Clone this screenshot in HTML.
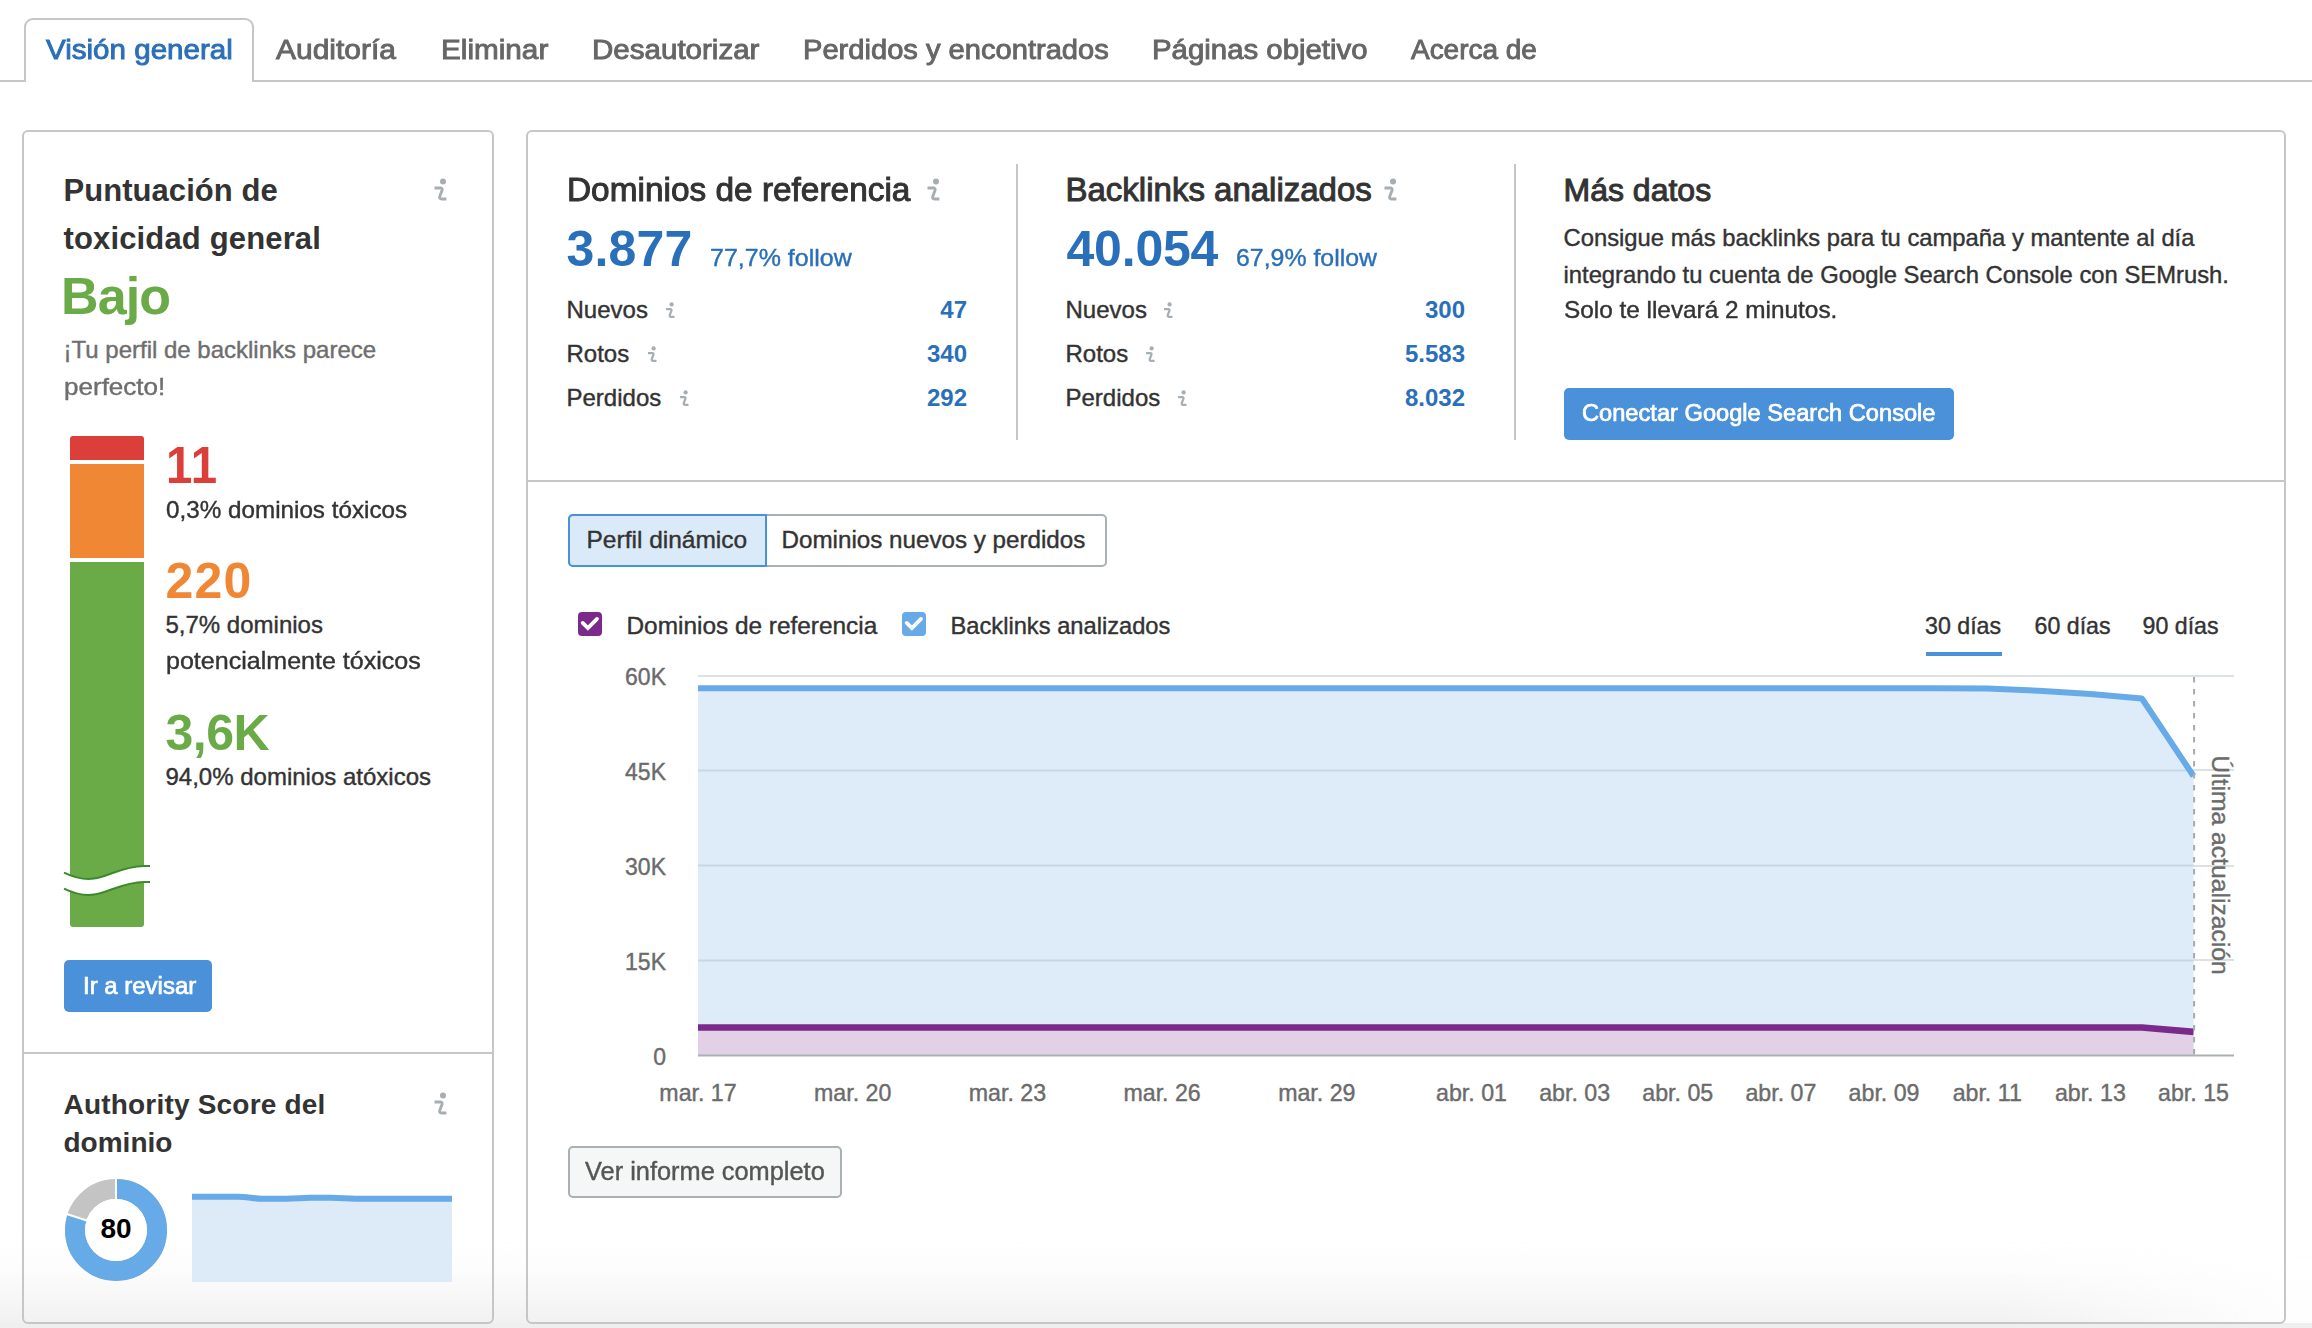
<!DOCTYPE html>
<html><head><meta charset="utf-8"><title>Backlink Audit</title>
<style>
html,body{margin:0;padding:0;background:#fff;width:2312px;height:1328px;overflow:hidden;}
body{position:relative;font-family:"Liberation Sans", sans-serif;}
.t{position:absolute;white-space:nowrap;}
.r{position:absolute;box-sizing:content-box;}
svg.r{overflow:visible;}
</style></head><body>
<div class="r" style="left:0px;top:80px;width:2312px;height:2px;background:#c6c6c6"></div>
<div class="r" style="left:24px;top:18px;width:226px;height:62px;border:2px solid #c6c6c6;border-bottom:none;border-radius:9px 9px 0 0;background:#fff"></div>
<div class="t" style="top:37.44px;font-size:27px;line-height:27px;font-weight:400;color:#2b6fb8;left:46.20px;transform:scaleX(1.095);transform-origin:left center;-webkit-text-stroke:0.9px #2b6fb8;">Visión general</div>
<div class="t" style="top:37.44px;font-size:27px;line-height:27px;font-weight:400;color:#666666;left:276.20px;transform:scaleX(1.11);transform-origin:left center;-webkit-text-stroke:0.9px #666666;">Auditoría</div>
<div class="t" style="top:37.44px;font-size:27px;line-height:27px;font-weight:400;color:#666666;left:441.20px;transform:scaleX(1.1);transform-origin:left center;-webkit-text-stroke:0.9px #666666;">Eliminar</div>
<div class="t" style="top:37.44px;font-size:27px;line-height:27px;font-weight:400;color:#666666;left:592.20px;transform:scaleX(1.094);transform-origin:left center;-webkit-text-stroke:0.9px #666666;">Desautorizar</div>
<div class="t" style="top:37.44px;font-size:27px;line-height:27px;font-weight:400;color:#666666;left:803.20px;transform:scaleX(1.078);transform-origin:left center;-webkit-text-stroke:0.9px #666666;">Perdidos y encontrados</div>
<div class="t" style="top:37.44px;font-size:27px;line-height:27px;font-weight:400;color:#666666;left:1151.70px;transform:scaleX(1.088);transform-origin:left center;-webkit-text-stroke:0.9px #666666;">Páginas objetivo</div>
<div class="t" style="top:37.44px;font-size:27px;line-height:27px;font-weight:400;color:#666666;left:1411.20px;transform:scaleX(1.035);transform-origin:left center;-webkit-text-stroke:0.9px #666666;">Acerca de</div>
<div class="r" style="left:0;top:1235px;width:2312px;height:93px;background:linear-gradient(to bottom, rgba(240,240,240,0) 0%, rgba(240,240,240,0.15) 35%, rgba(240,240,240,0.6) 70%, rgba(240,240,240,1) 100%);-webkit-mask-image:linear-gradient(to right, #000 0px, #000 2000px, rgba(0,0,0,0.1) 2290px);"></div>
<div class="r" style="left:0;top:1323px;width:2312px;height:5px;background:#efefef"></div>
<div class="r" style="left:22px;top:130px;width:468px;height:1190px;border:2px solid #c6c6c6;border-radius:6px"></div>
<div class="r" style="left:526px;top:130px;width:1756px;height:1190px;border:2px solid #c6c6c6;border-radius:6px"></div>
<div class="r" style="left:24px;top:1052px;width:468px;height:2px;background:#c6c6c6"></div>
<div class="r" style="left:528px;top:480px;width:1756px;height:2px;background:#c6c6c6"></div>
<div class="r" style="left:1016px;top:164px;width:2px;height:276px;background:#c6c6c6"></div>
<div class="r" style="left:1514px;top:164px;width:2px;height:276px;background:#c6c6c6"></div>
<div class="t" style="top:174.56px;font-size:31px;line-height:31px;font-weight:700;color:#333333;letter-spacing:0.05px;left:63.50px;">Puntuación de</div>
<div class="t" style="top:222.56px;font-size:31px;line-height:31px;font-weight:700;color:#333333;letter-spacing:0.15px;left:63.50px;">toxicidad general</div>
<svg class="r" style="left:432.50px;top:178.05px" width="15.00" height="22.50" viewBox="-1.5 -10 15 22.5"><circle cx="8.50" cy="-6.5" r="3" fill="#a6aeb2"/><path d="M0 0 L5.8 0 C7.3 0 7.9 0.9 7.6 2.2 L5.2 8.6 C4.8 10.1 5.5 10.95 7.1 10.95 L11.9 10.95" fill="none" stroke="#a6aeb2" stroke-width="2.9"/></svg>
<div class="t" style="top:269.78px;font-size:52px;line-height:52px;font-weight:700;color:#6aab47;letter-spacing:-0.9px;left:61.00px;">Bajo</div>
<div class="t" style="top:338.48px;font-size:24px;line-height:24px;font-weight:400;color:#6e6e6e;left:63.50px;-webkit-text-stroke:0.4px #6e6e6e;">¡Tu perfil de backlinks parece</div>
<div class="t" style="top:374.98px;font-size:24px;line-height:24px;font-weight:400;color:#6e6e6e;left:63.50px;transform:scaleX(1.085);transform-origin:left center;-webkit-text-stroke:0.4px #6e6e6e;">perfecto!</div>
<div class="r" style="left:70px;top:436px;width:74px;height:24px;background:#dc3f3a;border-radius:3px 3px 0 0"></div>
<div class="r" style="left:70px;top:464px;width:74px;height:94px;background:#ef8734"></div>
<div class="r" style="left:70px;top:562px;width:74px;height:365px;background:#6aab47;border-radius:0 0 3px 3px"></div>
<svg class="r" style="left:56px;top:850px" width="104" height="60" viewBox="0 0 104 60"><path d="M8 22.6 C 18 27.5, 28 30, 38 28.6 C 52 26.4, 68 16, 88 16 L 94 16 L 94 32 L 88 32 C 68 32, 52 42.4, 38 44.6 C 28 46, 18 43.5, 8 38.6 Z" fill="#fff"/><path d="M8 22.6 C 18 27.5, 28 30, 38 28.6 C 52 26.4, 68 16, 88 16 L 94 16" fill="none" stroke="#3b8a2b" stroke-width="2"/><path d="M8 38.6 C 18 43.5, 28 46, 38 44.6 C 52 42.4, 68 32, 88 32 L 94 32" fill="none" stroke="#3b8a2b" stroke-width="2"/></svg>
<div class="t" style="top:439.63px;font-size:51px;line-height:51px;font-weight:700;color:#dc3f3a;letter-spacing:1px;left:165.50px;transform:scaleX(0.93);transform-origin:left center;">11</div>
<div class="t" style="top:497.98px;font-size:24px;line-height:24px;font-weight:400;color:#333333;left:165.50px;transform:scaleX(1.01);transform-origin:left center;-webkit-text-stroke:0.4px #333333;">0,3% dominios tóxicos</div>
<div class="t" style="top:556.47px;font-size:50px;line-height:50px;font-weight:700;color:#ef8734;letter-spacing:1.2px;left:165.50px;">220</div>
<div class="t" style="top:613.48px;font-size:24px;line-height:24px;font-weight:400;color:#333333;left:165.50px;-webkit-text-stroke:0.4px #333333;">5,7% dominios</div>
<div class="t" style="top:649.15px;font-size:24.4px;line-height:24.4px;font-weight:400;color:#333333;left:165.50px;transform:scaleX(1.027);transform-origin:left center;-webkit-text-stroke:0.4px #333333;">potencialmente tóxicos</div>
<div class="t" style="top:708.47px;font-size:50px;line-height:50px;font-weight:700;color:#6aab47;letter-spacing:-0.5px;left:165.50px;">3,6K</div>
<div class="t" style="top:765.48px;font-size:24px;line-height:24px;font-weight:400;color:#333333;left:165.50px;-webkit-text-stroke:0.4px #333333;">94,0% dominios atóxicos</div>
<div class="r" style="left:64px;top:960px;width:148px;height:52px;background:#4a91d9;border-radius:5px"></div>
<div class="t" style="top:974.91px;font-size:23.5px;line-height:23.5px;font-weight:400;color:#ffffff;left:82.50px;transform:scaleX(1.02);transform-origin:left center;-webkit-text-stroke:0.7px #ffffff;">Ir a revisar</div>
<div class="t" style="top:1091.10px;font-size:28px;line-height:28px;font-weight:700;color:#333333;letter-spacing:0.2px;left:63.50px;">Authority Score del</div>
<div class="t" style="top:1128.60px;font-size:28px;line-height:28px;font-weight:700;color:#333333;left:63.50px;">dominio</div>
<svg class="r" style="left:432.50px;top:1092.05px" width="15.00" height="22.50" viewBox="-1.5 -10 15 22.5"><circle cx="8.50" cy="-6.5" r="3" fill="#a6aeb2"/><path d="M0 0 L5.8 0 C7.3 0 7.9 0.9 7.6 2.2 L5.2 8.6 C4.8 10.1 5.5 10.95 7.1 10.95 L11.9 10.95" fill="none" stroke="#a6aeb2" stroke-width="2.9"/></svg>
<svg class="r" style="left:64px;top:1178px" width="104" height="104" viewBox="0 0 104 104"><circle cx="52" cy="52" r="41" fill="none" stroke="#c4c4c4" stroke-width="20"/><circle cx="52" cy="52" r="41" fill="none" stroke="#66aae8" stroke-width="20" stroke-dasharray="206.1 1000" transform="rotate(-90 52 52)"/><line x1="52" y1="0" x2="52" y2="22" stroke="#fff" stroke-width="2"/><line x1="52" y1="52" x2="-5.06" y2="33.46" stroke="#fff" stroke-width="2.2"/><circle cx="52" cy="52" r="31" fill="#fff"/></svg>
<div class="t" style="top:1215.10px;font-size:28px;line-height:28px;font-weight:700;color:#000;left:-184px;width:600px;text-align:center;">80</div>
<svg class="r" style="left:192px;top:1190px" width="260" height="92" viewBox="0 0 260 92"><path d="M0 6.65 L46.5 6.65 C 56 6.65, 61 8.7, 70.3 8.7 L 94 8.7 C 104 8.7, 110 7.8, 118 7.8 L 139 7.8 C 149 7.8, 154 8.7, 164 8.7 L 260 8.85 L260 92 L0 92 Z" fill="#ddebf9"/><path d="M0 6.65 L46.5 6.65 C 56 6.65, 61 8.7, 70.3 8.7 L 94 8.7 C 104 8.7, 110 7.8, 118 7.8 L 139 7.8 C 149 7.8, 154 8.7, 164 8.7 L 260 8.85" fill="none" stroke="#66aae8" stroke-width="6"/></svg>
<div class="t" style="top:172.87px;font-size:33px;line-height:33px;font-weight:400;color:#333333;left:566.50px;transform:scaleX(1.012);transform-origin:left center;-webkit-text-stroke:1px #333;">Dominios de referencia</div>
<svg class="r" style="left:925.50px;top:178.05px" width="15.00" height="22.50" viewBox="-1.5 -10 15 22.5"><circle cx="8.50" cy="-6.5" r="3" fill="#a6aeb2"/><path d="M0 0 L5.8 0 C7.3 0 7.9 0.9 7.6 2.2 L5.2 8.6 C4.8 10.1 5.5 10.95 7.1 10.95 L11.9 10.95" fill="none" stroke="#a6aeb2" stroke-width="2.9"/></svg>
<div class="t" style="top:224.48px;font-size:50px;line-height:50px;font-weight:700;color:#2a6fba;letter-spacing:0.2px;left:566.50px;">3.877</div>
<div class="t" style="top:246.06px;font-size:24.5px;line-height:24.5px;font-weight:400;color:#2a6fba;left:709.50px;transform:scaleX(1.02);transform-origin:left center;-webkit-text-stroke:0.4px #2a6fba;">77,7% follow</div>
<div class="t" style="top:298.48px;font-size:24px;line-height:24px;font-weight:400;color:#333333;left:566.50px;-webkit-text-stroke:0.4px #333333;">Nuevos</div>
<svg class="r" style="left:664.93px;top:301.60px" width="10.65" height="15.97" viewBox="-1.5 -10 15 22.5"><circle cx="7.80" cy="-6.5" r="3" fill="#a6aeb2"/><path d="M0 0 L5.8 0 C7.3 0 7.9 0.9 7.6 2.2 L5.2 8.6 C4.8 10.1 5.5 10.95 7.1 10.95 L11.9 10.95" fill="none" stroke="#a6aeb2" stroke-width="3.1"/></svg>
<div class="t" style="top:298.48px;font-size:24px;line-height:24px;font-weight:700;color:#2a6fba;right:1345px;text-align:right;">47</div>
<div class="t" style="top:342.48px;font-size:24px;line-height:24px;font-weight:400;color:#333333;left:566.50px;-webkit-text-stroke:0.4px #333333;">Rotos</div>
<svg class="r" style="left:646.93px;top:345.60px" width="10.65" height="15.97" viewBox="-1.5 -10 15 22.5"><circle cx="7.80" cy="-6.5" r="3" fill="#a6aeb2"/><path d="M0 0 L5.8 0 C7.3 0 7.9 0.9 7.6 2.2 L5.2 8.6 C4.8 10.1 5.5 10.95 7.1 10.95 L11.9 10.95" fill="none" stroke="#a6aeb2" stroke-width="3.1"/></svg>
<div class="t" style="top:342.48px;font-size:24px;line-height:24px;font-weight:700;color:#2a6fba;right:1345px;text-align:right;">340</div>
<div class="t" style="top:386.48px;font-size:24px;line-height:24px;font-weight:400;color:#333333;left:566.50px;-webkit-text-stroke:0.4px #333333;">Perdidos</div>
<svg class="r" style="left:678.93px;top:389.60px" width="10.65" height="15.97" viewBox="-1.5 -10 15 22.5"><circle cx="7.80" cy="-6.5" r="3" fill="#a6aeb2"/><path d="M0 0 L5.8 0 C7.3 0 7.9 0.9 7.6 2.2 L5.2 8.6 C4.8 10.1 5.5 10.95 7.1 10.95 L11.9 10.95" fill="none" stroke="#a6aeb2" stroke-width="3.1"/></svg>
<div class="t" style="top:386.48px;font-size:24px;line-height:24px;font-weight:700;color:#2a6fba;right:1345px;text-align:right;">292</div>
<div class="t" style="top:172.87px;font-size:33px;line-height:33px;font-weight:400;color:#333333;left:1065.50px;-webkit-text-stroke:1px #333;">Backlinks analizados</div>
<svg class="r" style="left:1382.50px;top:178.05px" width="15.00" height="22.50" viewBox="-1.5 -10 15 22.5"><circle cx="8.50" cy="-6.5" r="3" fill="#a6aeb2"/><path d="M0 0 L5.8 0 C7.3 0 7.9 0.9 7.6 2.2 L5.2 8.6 C4.8 10.1 5.5 10.95 7.1 10.95 L11.9 10.95" fill="none" stroke="#a6aeb2" stroke-width="2.9"/></svg>
<div class="t" style="top:224.48px;font-size:50px;line-height:50px;font-weight:700;color:#2a6fba;letter-spacing:-0.2px;left:1066.50px;">40.054</div>
<div class="t" style="top:246.06px;font-size:24.5px;line-height:24.5px;font-weight:400;color:#2a6fba;left:1235.50px;transform:scaleX(1.015);transform-origin:left center;-webkit-text-stroke:0.4px #2a6fba;">67,9% follow</div>
<div class="t" style="top:298.48px;font-size:24px;line-height:24px;font-weight:400;color:#333333;left:1065.50px;-webkit-text-stroke:0.4px #333333;">Nuevos</div>
<svg class="r" style="left:1162.93px;top:301.60px" width="10.65" height="15.97" viewBox="-1.5 -10 15 22.5"><circle cx="7.80" cy="-6.5" r="3" fill="#a6aeb2"/><path d="M0 0 L5.8 0 C7.3 0 7.9 0.9 7.6 2.2 L5.2 8.6 C4.8 10.1 5.5 10.95 7.1 10.95 L11.9 10.95" fill="none" stroke="#a6aeb2" stroke-width="3.1"/></svg>
<div class="t" style="top:298.48px;font-size:24px;line-height:24px;font-weight:700;color:#2a6fba;right:847px;text-align:right;">300</div>
<div class="t" style="top:342.48px;font-size:24px;line-height:24px;font-weight:400;color:#333333;left:1065.50px;-webkit-text-stroke:0.4px #333333;">Rotos</div>
<svg class="r" style="left:1144.93px;top:345.60px" width="10.65" height="15.97" viewBox="-1.5 -10 15 22.5"><circle cx="7.80" cy="-6.5" r="3" fill="#a6aeb2"/><path d="M0 0 L5.8 0 C7.3 0 7.9 0.9 7.6 2.2 L5.2 8.6 C4.8 10.1 5.5 10.95 7.1 10.95 L11.9 10.95" fill="none" stroke="#a6aeb2" stroke-width="3.1"/></svg>
<div class="t" style="top:342.48px;font-size:24px;line-height:24px;font-weight:700;color:#2a6fba;right:847px;text-align:right;">5.583</div>
<div class="t" style="top:386.48px;font-size:24px;line-height:24px;font-weight:400;color:#333333;left:1065.50px;-webkit-text-stroke:0.4px #333333;">Perdidos</div>
<svg class="r" style="left:1176.93px;top:389.60px" width="10.65" height="15.97" viewBox="-1.5 -10 15 22.5"><circle cx="7.80" cy="-6.5" r="3" fill="#a6aeb2"/><path d="M0 0 L5.8 0 C7.3 0 7.9 0.9 7.6 2.2 L5.2 8.6 C4.8 10.1 5.5 10.95 7.1 10.95 L11.9 10.95" fill="none" stroke="#a6aeb2" stroke-width="3.1"/></svg>
<div class="t" style="top:386.48px;font-size:24px;line-height:24px;font-weight:700;color:#2a6fba;right:847px;text-align:right;">8.032</div>
<div class="t" style="top:173.71px;font-size:32px;line-height:32px;font-weight:400;color:#333333;left:1563.50px;-webkit-text-stroke:1px #333;">Más datos</div>
<div class="t" style="top:226.15px;font-size:23.8px;line-height:23.8px;font-weight:400;color:#333333;left:1563.50px;-webkit-text-stroke:0.4px #333333;">Consigue más backlinks para tu campaña y mantente al día</div>
<div class="t" style="top:262.65px;font-size:23.8px;line-height:23.8px;font-weight:400;color:#333333;left:1563.50px;-webkit-text-stroke:0.4px #333333;">integrando tu cuenta de Google Search Console con SEMrush.</div>
<div class="t" style="top:298.15px;font-size:23.8px;line-height:23.8px;font-weight:400;color:#333333;left:1563.50px;transform:scaleX(1.023);transform-origin:left center;-webkit-text-stroke:0.4px #333333;">Solo te llevará 2 minutos.</div>
<div class="r" style="left:1564px;top:388px;width:390px;height:52px;background:#4a91d9;border-radius:5px"></div>
<div class="t" style="top:402.41px;font-size:23.5px;line-height:23.5px;font-weight:400;color:#ffffff;left:1582.00px;transform:scaleX(1.006);transform-origin:left center;-webkit-text-stroke:0.7px #ffffff;">Conectar Google Search Console</div>
<div class="r" style="left:568px;top:514px;width:535px;height:49px;border:2px solid #a9b1b4;border-radius:5px"></div>
<div class="r" style="left:568px;top:514px;width:195px;height:49px;border:2px solid #4a91d9;border-radius:5px 0 0 5px;background:#dbeaf8"></div>
<div class="t" style="top:527.56px;font-size:24.5px;line-height:24.5px;font-weight:400;color:#333333;left:586.50px;-webkit-text-stroke:0.4px #333333;">Perfil dinámico</div>
<div class="t" style="top:527.81px;font-size:24.2px;line-height:24.2px;font-weight:400;color:#333333;left:781.50px;-webkit-text-stroke:0.4px #333333;">Dominios nuevos y perdidos</div>
<svg class="r" style="left:578px;top:612px" width="24" height="24" viewBox="0 0 24 24"><rect width="24" height="24" rx="4" fill="#7b2a8c"/><path d="M4.7 10.9 L9.9 16.0 L19.0 6.9" fill="none" stroke="#fff" stroke-width="3.8" stroke-linecap="round" stroke-linejoin="miter"/></svg>
<div class="t" style="top:614.15px;font-size:24.4px;line-height:24.4px;font-weight:400;color:#333333;left:626.50px;-webkit-text-stroke:0.4px #333333;">Dominios de referencia</div>
<svg class="r" style="left:902px;top:612px" width="24" height="24" viewBox="0 0 24 24"><rect width="24" height="24" rx="4" fill="#66aae8"/><path d="M4.7 10.9 L9.9 16.0 L19.0 6.9" fill="none" stroke="#fff" stroke-width="3.8" stroke-linecap="round" stroke-linejoin="miter"/></svg>
<div class="t" style="top:614.74px;font-size:23.7px;line-height:23.7px;font-weight:400;color:#333333;left:950.50px;-webkit-text-stroke:0.4px #333333;">Backlinks analizados</div>
<div class="t" style="top:615.16px;font-size:23.2px;line-height:23.2px;font-weight:400;color:#333333;left:1925.00px;-webkit-text-stroke:0.4px #333333;">30 días</div>
<div class="t" style="top:615.16px;font-size:23.2px;line-height:23.2px;font-weight:400;color:#333333;left:2034.50px;-webkit-text-stroke:0.4px #333333;">60 días</div>
<div class="t" style="top:615.16px;font-size:23.2px;line-height:23.2px;font-weight:400;color:#333333;left:2142.50px;-webkit-text-stroke:0.4px #333333;">90 días</div>
<div class="r" style="left:1926px;top:652px;width:76px;height:4px;background:#4a91d9"></div>
<div class="r" style="left:698px;top:675px;width:1536px;height:2px;background:#dce1e3"></div>
<div class="r" style="left:698px;top:769px;width:1536px;height:2px;background:#dce1e3"></div>
<div class="r" style="left:698px;top:865px;width:1536px;height:2px;background:#dce1e3"></div>
<div class="r" style="left:698px;top:959px;width:1536px;height:2px;background:#dce1e3"></div>
<div class="t" style="top:666.43px;font-size:23px;line-height:23px;font-weight:400;color:#6b6b6b;right:1646px;text-align:right;-webkit-text-stroke:0.4px #6b6b6b;">60K</div>
<div class="t" style="top:761.43px;font-size:23px;line-height:23px;font-weight:400;color:#6b6b6b;right:1646px;text-align:right;-webkit-text-stroke:0.4px #6b6b6b;">45K</div>
<div class="t" style="top:856.43px;font-size:23px;line-height:23px;font-weight:400;color:#6b6b6b;right:1646px;text-align:right;-webkit-text-stroke:0.4px #6b6b6b;">30K</div>
<div class="t" style="top:951.43px;font-size:23px;line-height:23px;font-weight:400;color:#6b6b6b;right:1646px;text-align:right;-webkit-text-stroke:0.4px #6b6b6b;">15K</div>
<div class="t" style="top:1046.43px;font-size:23px;line-height:23px;font-weight:400;color:#6b6b6b;right:1646px;text-align:right;-webkit-text-stroke:0.4px #6b6b6b;">0</div>
<svg class="r" style="left:698px;top:600px" width="1542" height="460" viewBox="0 0 1542 460"><path d="M0.0 88.3 L51.6 88.3 L103.1 88.3 L154.7 88.3 L206.3 88.3 L257.8 88.3 L309.4 88.3 L361.0 88.3 L412.6 88.3 L464.1 88.3 L515.7 88.3 L567.3 88.3 L618.8 88.3 L670.4 88.3 L722.0 88.3 L773.5 88.3 L825.1 88.3 L876.7 88.3 L928.2 88.3 L979.8 88.3 L1031.4 88.3 L1082.9 88.3 L1134.5 88.3 L1186.1 88.3 L1237.7 88.3 L1289.2 88.5 L1340.8 90.7 L1392.4 94.0 L1443.9 98.5 L1495.5 176.0 L1495.5 455.5 L0 455.5 Z" fill="#deecf9"/><rect x="0" y="169.5" width="1495.5" height="2" fill="#c5d7e4"/><rect x="0" y="264.5" width="1495.5" height="2" fill="#c5d7e4"/><rect x="0" y="359.5" width="1495.5" height="2" fill="#c5d7e4"/><path d="M0.0 427.0 L51.6 427.0 L103.1 427.0 L154.7 427.0 L206.3 427.0 L257.8 427.0 L309.4 427.0 L361.0 427.0 L412.6 427.0 L464.1 427.0 L515.7 427.0 L567.3 427.0 L618.8 427.0 L670.4 427.0 L722.0 427.0 L773.5 427.0 L825.1 427.0 L876.7 427.0 L928.2 427.0 L979.8 427.0 L1031.4 427.0 L1082.9 427.0 L1134.5 427.0 L1186.1 427.0 L1237.7 427.0 L1289.2 427.0 L1340.8 427.0 L1392.4 427.0 L1443.9 427.0 L1495.5 431.4 L1495.5 455.5 L0 455.5 Z" fill="#e2d0e6"/><path d="M0.0 88.3 L51.6 88.3 L103.1 88.3 L154.7 88.3 L206.3 88.3 L257.8 88.3 L309.4 88.3 L361.0 88.3 L412.6 88.3 L464.1 88.3 L515.7 88.3 L567.3 88.3 L618.8 88.3 L670.4 88.3 L722.0 88.3 L773.5 88.3 L825.1 88.3 L876.7 88.3 L928.2 88.3 L979.8 88.3 L1031.4 88.3 L1082.9 88.3 L1134.5 88.3 L1186.1 88.3 L1237.7 88.3 L1289.2 88.5 L1340.8 90.7 L1392.4 94.0 L1443.9 98.5 L1495.5 176.0" fill="none" stroke="#66aae8" stroke-width="6" stroke-linejoin="round"/><path d="M0.0 427.0 L51.6 427.0 L103.1 427.0 L154.7 427.0 L206.3 427.0 L257.8 427.0 L309.4 427.0 L361.0 427.0 L412.6 427.0 L464.1 427.0 L515.7 427.0 L567.3 427.0 L618.8 427.0 L670.4 427.0 L722.0 427.0 L773.5 427.0 L825.1 427.0 L876.7 427.0 L928.2 427.0 L979.8 427.0 L1031.4 427.0 L1082.9 427.0 L1134.5 427.0 L1186.1 427.0 L1237.7 427.0 L1289.2 427.0 L1340.8 427.0 L1392.4 427.0 L1443.9 427.0 L1495.5 431.4" fill="none" stroke="#7b2a8c" stroke-width="6.6" stroke-linejoin="round" transform="translate(0 0.5)"/><line x1="1496.1" y1="77" x2="1496.1" y2="455.5" stroke="#a3abae" stroke-width="2" stroke-dasharray="5.5 6.5"/><rect x="0" y="454.5" width="1536" height="2" fill="#a9b1b4"/></svg>
<div class="t" style="top:1081.66px;font-size:23.2px;line-height:23.2px;font-weight:400;color:#6b6b6b;left:398.0px;width:600px;text-align:center;-webkit-text-stroke:0.4px #6b6b6b;">mar. 17</div>
<div class="t" style="top:1081.66px;font-size:23.2px;line-height:23.2px;font-weight:400;color:#6b6b6b;left:552.7068965517242px;width:600px;text-align:center;-webkit-text-stroke:0.4px #6b6b6b;">mar. 20</div>
<div class="t" style="top:1081.66px;font-size:23.2px;line-height:23.2px;font-weight:400;color:#6b6b6b;left:707.4137931034483px;width:600px;text-align:center;-webkit-text-stroke:0.4px #6b6b6b;">mar. 23</div>
<div class="t" style="top:1081.66px;font-size:23.2px;line-height:23.2px;font-weight:400;color:#6b6b6b;left:862.1206896551726px;width:600px;text-align:center;-webkit-text-stroke:0.4px #6b6b6b;">mar. 26</div>
<div class="t" style="top:1081.66px;font-size:23.2px;line-height:23.2px;font-weight:400;color:#6b6b6b;left:1016.8275862068965px;width:600px;text-align:center;-webkit-text-stroke:0.4px #6b6b6b;">mar. 29</div>
<div class="t" style="top:1081.66px;font-size:23.2px;line-height:23.2px;font-weight:400;color:#6b6b6b;left:1171.5344827586207px;width:600px;text-align:center;-webkit-text-stroke:0.4px #6b6b6b;">abr. 01</div>
<div class="t" style="top:1081.66px;font-size:23.2px;line-height:23.2px;font-weight:400;color:#6b6b6b;left:1274.6724137931035px;width:600px;text-align:center;-webkit-text-stroke:0.4px #6b6b6b;">abr. 03</div>
<div class="t" style="top:1081.66px;font-size:23.2px;line-height:23.2px;font-weight:400;color:#6b6b6b;left:1377.8103448275863px;width:600px;text-align:center;-webkit-text-stroke:0.4px #6b6b6b;">abr. 05</div>
<div class="t" style="top:1081.66px;font-size:23.2px;line-height:23.2px;font-weight:400;color:#6b6b6b;left:1480.948275862069px;width:600px;text-align:center;-webkit-text-stroke:0.4px #6b6b6b;">abr. 07</div>
<div class="t" style="top:1081.66px;font-size:23.2px;line-height:23.2px;font-weight:400;color:#6b6b6b;left:1584.0862068965519px;width:600px;text-align:center;-webkit-text-stroke:0.4px #6b6b6b;">abr. 09</div>
<div class="t" style="top:1081.66px;font-size:23.2px;line-height:23.2px;font-weight:400;color:#6b6b6b;left:1687.2241379310344px;width:600px;text-align:center;-webkit-text-stroke:0.4px #6b6b6b;">abr. 11</div>
<div class="t" style="top:1081.66px;font-size:23.2px;line-height:23.2px;font-weight:400;color:#6b6b6b;left:1790.3620689655172px;width:600px;text-align:center;-webkit-text-stroke:0.4px #6b6b6b;">abr. 13</div>
<div class="t" style="top:1081.66px;font-size:23.2px;line-height:23.2px;font-weight:400;color:#6b6b6b;left:1893.5px;width:600px;text-align:center;-webkit-text-stroke:0.4px #6b6b6b;">abr. 15</div>
<div class="t" style="left:2219.5px;top:865px;font-size:23.5px;line-height:24px;color:#6b6b6b;-webkit-text-stroke:0.4px #6b6b6b;transform:translate(-50%,-50%) rotate(90deg) scaleX(1.05);white-space:nowrap">Última actualización</div>
<div class="r" style="left:568px;top:1146px;width:270px;height:48px;border:2px solid #a9b1b4;border-radius:5px;background:#f5f7f7"></div>
<div class="t" style="top:1159.14px;font-size:25px;line-height:25px;font-weight:400;color:#555555;left:584.50px;transform:scaleX(1.015);transform-origin:left center;-webkit-text-stroke:0.4px #555555;">Ver informe completo</div>
</body></html>
